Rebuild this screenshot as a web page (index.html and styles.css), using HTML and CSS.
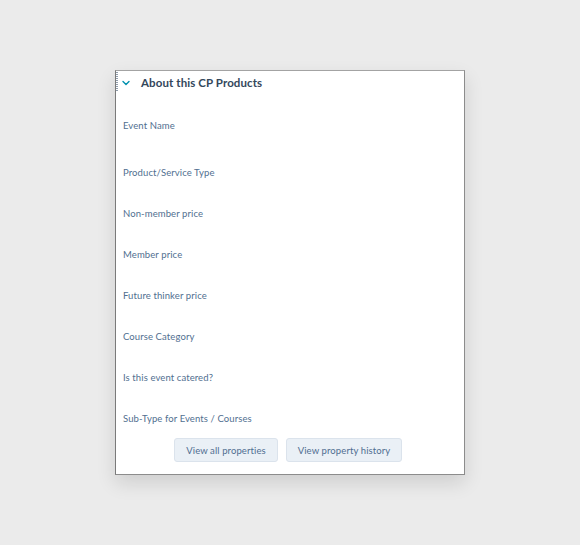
FILE: index.html
```html
<!DOCTYPE html>
<html>
<head>
<meta charset="utf-8">
<link rel="stylesheet" href="styles.css">
</head>
<body>
<div class="stage">
  <section class="card">
    <span class="grip"></span>
    <header class="card-head">
      <svg class="chev" width="8" height="6" viewBox="0 0 8 6"><path d="M1 1.5 L4 4.5 L7 1.5" fill="none" stroke="#0091ae" stroke-width="1.4" stroke-linecap="round" stroke-linejoin="round"/></svg>
      <h2 class="title">About this CP Products</h2>
    </header>
    <ul class="props">
      <li class="prop first">Event Name</li>
      <li class="prop">Product/Service Type</li>
      <li class="prop">Non-member price</li>
      <li class="prop">Member price</li>
      <li class="prop">Future thinker price</li>
      <li class="prop">Course Category</li>
      <li class="prop">Is this event catered?</li>
      <li class="prop last">Sub-Type for Events / Courses</li>
    </ul>
    <div class="actions">
      <button class="btn btn-all">View all properties</button>
      <button class="btn btn-hist">View property history</button>
    </div>
  </section>
</div>
</body>
</html>
```
FILE: styles.css
```css
html, body {
  margin: 0;
  padding: 0;
  background: #ebebeb;
  width: 580px;
  height: 545px;
  overflow: hidden;
}
.stage {
  padding: 70px 0 0 115px;
}
.card {
  position: relative;
  box-sizing: border-box;
  width: 350px;
  height: 405px;
  background: #fff;
  border: 1px solid #8c8c8c;
  border-top-color: #a3a3a3;
  border-left-color: #7a7a7a;
  box-shadow: 0 8px 18px rgba(0,0,0,0.12);
  font-family: "Lato", "Noto Sans", sans-serif;
  display: flex;
  flex-direction: column;
}
.grip {
  position: absolute;
  left: 0;
  top: 1px;
  width: 2px;
  height: 20px;
  background: repeating-linear-gradient(to bottom, #8f9cab 0 1px, transparent 1px 2px);
}
.card-head {
  display: flex;
  align-items: center;
  height: 23px;
  padding-left: 6px;
}
.chev {
  display: block;
  margin-right: 11px;
}
.title {
  margin: 0;
  font-size: 11.5px;
  font-weight: 700;
  color: #33475b;
  letter-spacing: 0.1px;
}
.props {
  list-style: none;
  margin: 0;
  padding: 25px 0 0 7px;
}
.prop {
  font-size: 9.5px;
  line-height: 14px;
  color: #516f90;
  margin-bottom: 27px;
  letter-spacing: 0.1px;
}
.prop.first {
  margin-bottom: 33px;
}
.prop.last {
  margin-bottom: 0;
}
.actions {
  display: flex;
  justify-content: center;
  gap: 8px;
  margin-top: 12px;
  padding-right: 4px;
}
.btn {
  font-family: "Lato", "Noto Sans", sans-serif;
  font-size: 9.5px;
  color: #506e91;
  background: #eaf0f6;
  border: 1px solid #dbe3ec;
  border-radius: 3px;
  height: 24px;
  padding: 0;
  white-space: nowrap;
  letter-spacing: 0.1px;
}
.btn-all { width: 104px; }
.btn-hist { width: 116px; }
```
